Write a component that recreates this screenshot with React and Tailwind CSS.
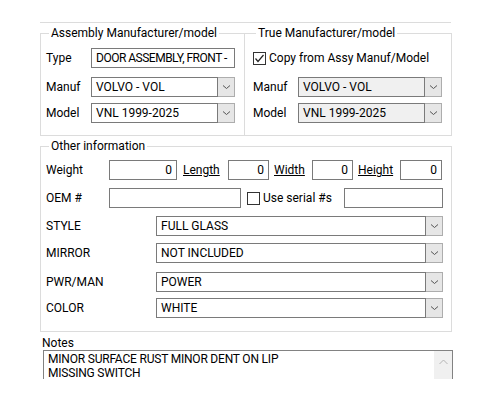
import React from "react";

const Chevron = ({ up }) => (
    <svg width="9" height="6" viewBox="0 0 9 6" fill="none">
        {up ? (
            <path d="M0.5 5 L4.5 1 L8.5 5" stroke="#b4b4b4" strokeWidth="1" />
        ) : (
            <path d="M1 1.5 L4.5 4.5 L8 1.5" stroke="#555" strokeWidth="1" />
        )}
    </svg>
);

const Select = ({ value, width, disabled }) => (
    <div className={`flex h-[20px] ${width}`}>
        <div className={`flex-1 flex items-center pl-[4px] border border-[#7a7a7a] whitespace-nowrap overflow-hidden ${disabled ? "bg-[#f0f0f0]" : "bg-white"}`}>
            {value}
        </div>
        <div className="w-[17px] flex items-center justify-center bg-[#e6e6e6] border border-l-0 border-[#adadad]">
            <Chevron />
        </div>
    </div>
);

const Input = ({ value, width, right }) => (
    <div className={`h-[20px] ${width} border border-[#7a7a7a] bg-white flex items-center whitespace-nowrap overflow-hidden ${right ? "justify-end pr-[4px]" : "pl-[4px]"}`}>
        {value}
    </div>
);

const Checkbox = ({ checked }) => (
    <div className="w-[13px] h-[13px] border border-[#333] bg-white flex items-center justify-center">
        {checked && (
            <svg width="11" height="11" viewBox="0 0 11 11" fill="none">
                <path d="M1.5 5.5 L4 8.5 L9.5 2" stroke="#222" strokeWidth="1.2" />
            </svg>
        )}
    </div>
);

const Legend = ({ children }) => (
    <legend className="ml-[3px] px-[2px] leading-[14px]">{children}</legend>
);

const Row = ({ label, labelWidth, className, children }) => (
    <div className={`flex items-center ${className || ""}`}>
        <span className={labelWidth}>{label}</span>
        {children}
    </div>
);

const App = () => {
    return (
        <div className="w-[500px] h-[400px] bg-white overflow-hidden pl-[40px] pt-[22px] font-['Roboto',sans-serif] text-[12px] leading-[14px] text-black">
            <div className="w-[411px] border-t border-[#dcdcdc]" />

            <div className="flex mt-[3px]">
                <fieldset className="w-[204px] h-[110px] border border-r-0 border-[#dcdcdc] pl-[5px] pt-[8px]">
                    <Legend>Assembly Manufacturer/model</Legend>
                    <Row label="Type" labelWidth="w-[45px]">
                        <Input value={<span className="tracking-[-0.5px]">DOOR ASSEMBLY, FRONT -</span>} width="w-[144px]" />
                    </Row>
                    <Row label="Manuf" labelWidth="w-[45px]" className="mt-[9px]">
                        <Select value="VOLVO - VOL" width="w-[144px]" />
                    </Row>
                    <Row label="Model" labelWidth="w-[45px]" className="mt-[6px]">
                        <Select value="VNL 1999-2025" width="w-[144px]" />
                    </Row>
                </fieldset>

                <fieldset className="w-[208px] h-[110px] border border-[#dcdcdc] pl-[8px] pt-[11px]">
                    <Legend>True Manufacturer/model</Legend>
                    <div className="flex items-center">
                        <Checkbox checked />
                        <span className="ml-[3px]">Copy from Assy Manuf/Model</span>
                    </div>
                    <Row label="Manuf" labelWidth="w-[45px]" className="mt-[12px]">
                        <Select value="VOLVO - VOL" width="w-[144px]" disabled />
                    </Row>
                    <Row label="Model" labelWidth="w-[45px]" className="mt-[6px]">
                        <Select value="VNL 1999-2025" width="w-[144px]" disabled />
                    </Row>
                </fieldset>
            </div>

            <fieldset className="w-[412px] h-[193px] mt-[3px] border border-[#dcdcdc] pl-[5px] pt-[7px]">
                <Legend>Other information</Legend>
                <Row label="Weight" labelWidth="w-[63px]">
                    <Input value="0" width="w-[68px]" right />
                    <span className="ml-[6px] w-[45px] underline">Length</span>
                    <Input value="0" width="w-[41px]" right />
                    <span className="ml-[5px] w-[38px] underline">Width</span>
                    <Input value="0" width="w-[41px]" right />
                    <span className="ml-[5px] w-[42px] underline">Height</span>
                    <Input value="0" width="w-[42px]" right />
                </Row>
                <Row label="OEM #" labelWidth="w-[63px]" className="mt-[8px]">
                    <Input value="" width="w-[132px]" />
                    <div className="ml-[6px]">
                        <Checkbox />
                    </div>
                    <span className="ml-[3px] w-[81px]">Use serial #s</span>
                    <Input value="" width="w-[99px]" />
                </Row>
                <Row label="STYLE" labelWidth="w-[110px]" className="mt-[8px]">
                    <Select value="FULL GLASS" width="w-[287px]" />
                </Row>
                <Row label="MIRROR" labelWidth="w-[110px]" className="mt-[7px]">
                    <Select value="NOT INCLUDED" width="w-[287px]" />
                </Row>
                <Row label="PWR/MAN" labelWidth="w-[110px]" className="mt-[9px]">
                    <Select value="POWER" width="w-[287px]" />
                </Row>
                <Row label="COLOR" labelWidth="w-[110px]" className="mt-[6px]">
                    <Select value="WHITE" width="w-[287px]" />
                </Row>
            </fieldset>

            <div className="mt-[4px] pl-[2px]">Notes</div>
            <div className="ml-[3px] w-[410px] h-[29px] border border-b-0 border-[#828282] flex overflow-hidden">
                <div className="flex-1 pl-[4px] pt-[1px] tracking-[-0.2px]">
                    <div>MINOR SURFACE RUST MINOR DENT ON LIP</div>
                    <div>MISSING SWITCH</div>
                </div>
                <div className="w-[18px] bg-[#f0f0f0] flex justify-center pt-[8px]">
                    <Chevron up />
                </div>
            </div>
        </div>
    );
};

export default App;
